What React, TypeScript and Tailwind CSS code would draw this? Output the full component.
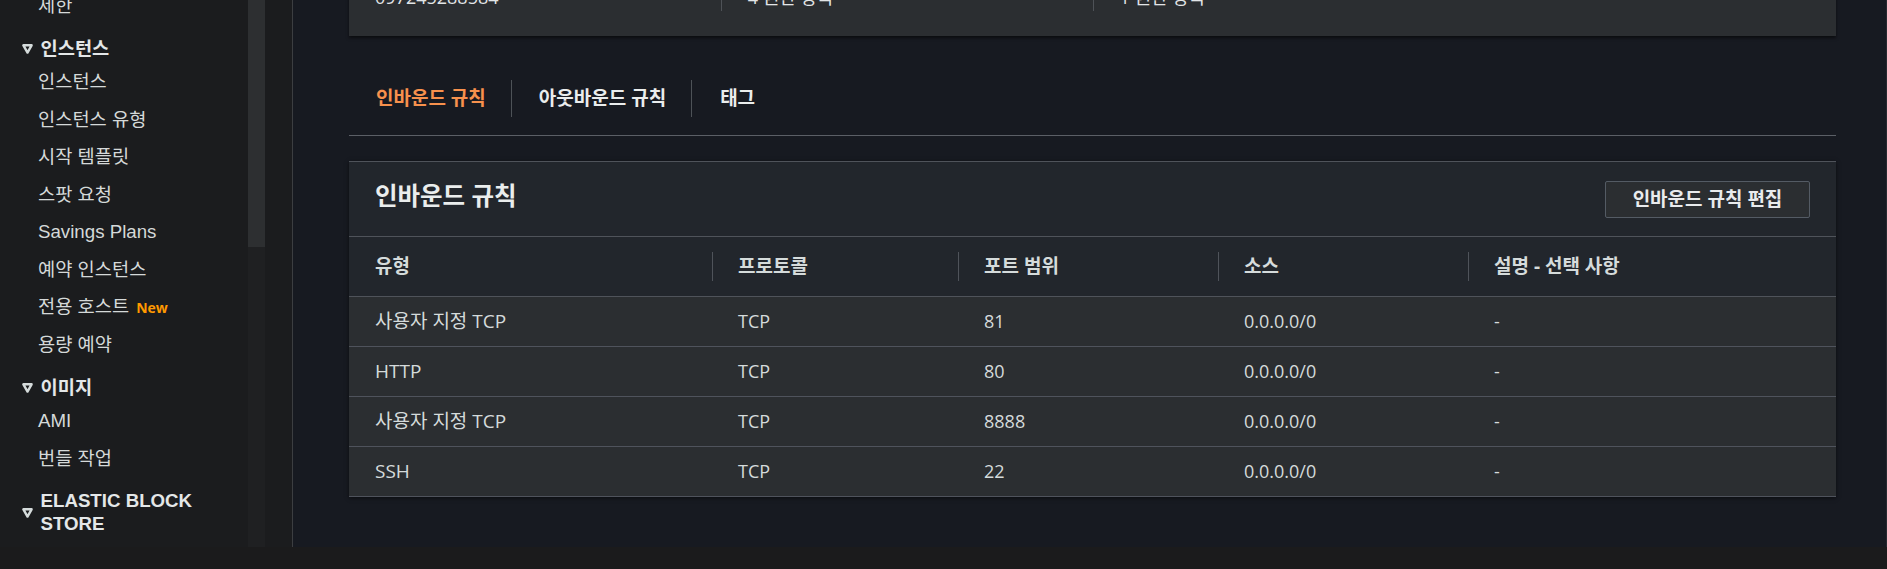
type NavEntry =
  | { kind: "item"; label: string; isNew?: boolean }
  | { kind: "heading"; label: string };

const navEntries: NavEntry[] = [
  { kind: "item", label: "제한" },
  { kind: "heading", label: "인스턴스" },
  { kind: "item", label: "인스턴스" },
  { kind: "item", label: "인스턴스 유형" },
  { kind: "item", label: "시작 템플릿" },
  { kind: "item", label: "스팟 요청" },
  { kind: "item", label: "Savings Plans" },
  { kind: "item", label: "예약 인스턴스" },
  { kind: "item", label: "전용 호스트", isNew: true },
  { kind: "item", label: "용량 예약" },
  { kind: "heading", label: "이미지" },
  { kind: "item", label: "AMI" },
  { kind: "item", label: "번들 작업" },
  { kind: "heading", label: "ELASTIC BLOCK STORE" },
  { kind: "item", label: "볼륨" },
];

const summary = [
  { label: "소유자", value: "097245288584" },
  { label: "인바운드 규칙 수", value: "4 권한 항목" },
  { label: "아웃바운드 규칙 수", value: "1 권한 항목" },
  { label: "", value: "" },
];

const rules = [
  { type: "사용자 지정 TCP", protocol: "TCP", port: "81", source: "0.0.0.0/0", desc: "-" },
  { type: "HTTP", protocol: "TCP", port: "80", source: "0.0.0.0/0", desc: "-" },
  { type: "사용자 지정 TCP", protocol: "TCP", port: "8888", source: "0.0.0.0/0", desc: "-" },
  { type: "SSH", protocol: "TCP", port: "22", source: "0.0.0.0/0", desc: "-" },
];

const columns = ["유형", "프로토콜", "포트 범위", "소스", "설명 - 선택 사항"];

function Caret() {
  return (
    <svg width="11" height="10" viewBox="0 0 11 10" className="shrink-0">
      <polygon
        points="1.4,1.3 9.6,1.3 5.5,8.6"
        fill="none"
        stroke="#d5dbdb"
        strokeWidth="2.4"
        strokeLinejoin="round"
      />
    </svg>
  );
}

function Sidebar() {
  return (
    <aside className="w-[293px] h-full flex bg-[#1b1c1e] border-r border-[#3c3e41] font-['Liberation_Sans','Noto_Sans_CJK_KR',sans-serif] text-[18.7px] text-[#d5d9d9]">
      <nav className="w-[248px] h-full overflow-hidden">
        <ul className="-mt-[12.5px]">
          {navEntries.map((e, i) =>
            e.kind === "heading" ? (
              <li key={i} className="flex items-center pl-[22px] pr-[36px] pt-[13px] pb-[3.2px]">
                <Caret />
                <span className="ml-[7.5px] font-bold leading-[22.5px] text-[#e4e7e8]">{e.label}</span>
              </li>
            ) : (
              <li key={i} className="h-[37.5px] flex items-center pl-[38px] whitespace-nowrap">
                {e.label}
                {e.isNew && (
                  <span className="ml-[7px] font-['Open_Sans',sans-serif] text-[14px] font-bold text-[#ff9900]">New</span>
                )}
              </li>
            )
          )}
        </ul>
      </nav>
      <div className="w-[17px] h-full flex flex-col bg-[#1f2022]">
        <div className="h-[247px] bg-[#2d2f31]" />
      </div>
    </aside>
  );
}

function SummaryCard() {
  return (
    <section className="-mt-[66px] grid grid-cols-4 bg-[#2b2e31] pt-[20px] pb-[25px] shadow-[0_2px_3px_rgba(0,0,0,0.55)]">
      {summary.map((s, i) => (
        <div
          key={i}
          className={
            i === 0 || i === 3
              ? "pl-[26px] pb-px"
              : "pl-[26px] pb-px border-l border-[#4e5257]"
          }
        >
          <div className="h-[26px] leading-[26px] font-bold text-[#aab2b8]">{s.label}</div>
          <div className="mt-[4px] h-[26px] leading-[26px] text-[#e2e5e7]">{s.value}</div>
        </div>
      ))}
    </section>
  );
}

function Tabs() {
  return (
    <nav className="mt-[44px] pb-[18px] flex border-b border-[#5b5f66] text-[19px] font-bold">
      <button className="h-[37px] pl-[27px] pr-[25px] text-[#f7914d]">인바운드 규칙</button>
      <button className="h-[37px] pl-[27px] pr-[25px] border-l border-[#4d5257] text-[#eaeded]">아웃바운드 규칙</button>
      <button className="h-[37px] pl-[28px] pr-[25px] border-l border-[#4d5257] text-[#eaeded]">태그</button>
    </nav>
  );
}

function RulesPanel() {
  const grid = "grid grid-cols-[363px_246px_260px_250px_1fr]";
  return (
    <section className="mt-[25px] bg-[#22262c] border-t border-[#4f535a] shadow-[0_1px_4px_rgba(0,0,0,0.55)]">
      <header className="h-[75px] flex items-center justify-between px-[26px] border-b border-[#4f535a]">
        <h2 className="mb-[6px] text-[24.5px] font-semibold text-[#eaeded]">인바운드 규칙</h2>
        <button className="w-[205px] h-[37px] rounded-[2px] border border-[#545b64] bg-[#2b2e31] text-[19px] font-bold text-[#e9ebed]">
          인바운드 규칙 편집
        </button>
      </header>
      <div className={`${grid} h-[60px] border-b border-[#4f535a] text-[19px] font-bold text-[#d5dbdb]`}>
        {columns.map((c, i) => (
          <div key={c} className="flex items-center">
            <span
              className={
                i === 0
                  ? "pl-[26px]"
                  : "h-[29px] flex items-center pl-[25px] border-l border-[#4f535a]"
              }
            >
              {c}
            </span>
          </div>
        ))}
      </div>
      {rules.map((r, i) => (
        <div
          key={i}
          className={`${grid} h-[50px] bg-[#2b2e31] border-b border-[#4f535c] text-[18px] text-[#d5dbdb]`}
        >
          <div className="flex items-center pl-[26px] text-[19px]">{r.type}</div>
          <div className="flex items-center pl-[26px]">{r.protocol}</div>
          <div className="flex items-center pl-[26px]">{r.port}</div>
          <div className="flex items-center pl-[26px]">{r.source}</div>
          <div className="flex items-center pl-[26px]">{r.desc}</div>
        </div>
      ))}
    </section>
  );
}

export default function App() {
  return (
    <div className="w-[1887px] h-[569px] flex flex-col overflow-hidden bg-[#1b1b1c] font-['Open_Sans','Noto_Sans_CJK_KR',sans-serif]">
      <div className="h-[547px] flex">
        <Sidebar />
        <main className="flex-1 h-full overflow-hidden bg-[#171a21] pl-[56px] pr-[50px] border-r border-[#262a31] text-[18px]">
          <SummaryCard />
          <Tabs />
          <RulesPanel />
        </main>
      </div>
      <div className="h-[22px] bg-[#1b1b1c]" />
    </div>
  );
}
